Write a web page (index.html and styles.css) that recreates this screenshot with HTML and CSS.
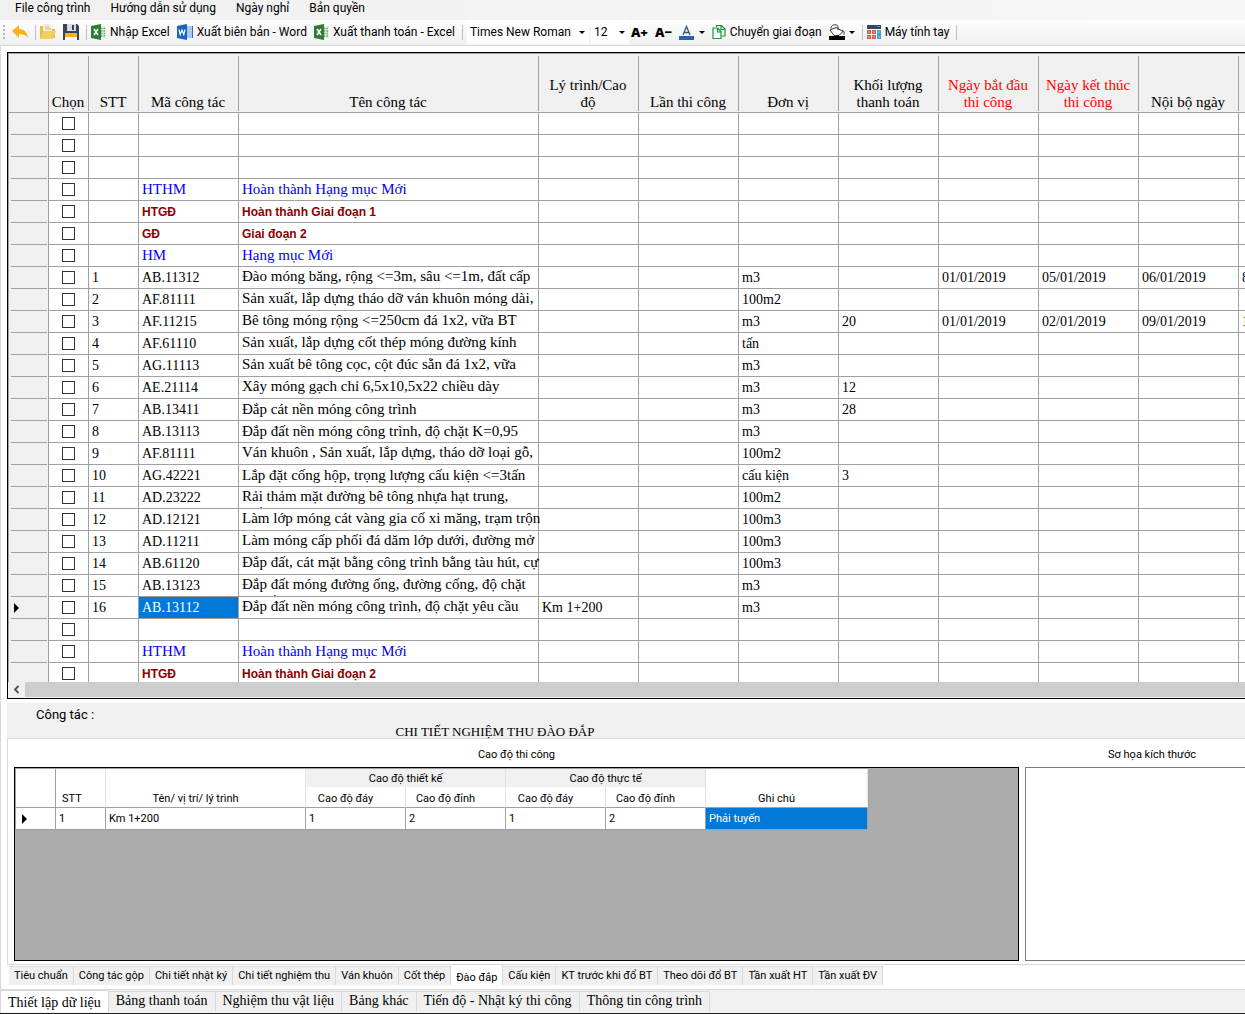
FILE: index.html
```html
<!DOCTYPE html>
<html lang="vi">
<head>
    <meta charset="UTF-8">
    <meta name="viewport" content="width=device-width, initial-scale=1.0">
    <title>Thiết lập dữ liệu</title>
    <link rel="stylesheet" href="styles.css">
</head>
<body>

    <nav class="menu">
        <button>File công trình</button>
        <button>Hướng dẫn sử dụng</button>
        <button>Ngày nghỉ</button>
        <button>Bản quyền</button>
    </nav>

    <div class="toolbar">
        <span class="grip"></span>
        <button aria-label="Undo">
            <svg width="16" height="16" viewBox="0 0 16 16"><path d="M0 7 7 1v4c5 0 8 3 9 9-2-3-5-4-9-4v4z" fill="#f9b115"/></svg>
        </button>
        <span class="sep"></span>
        <button aria-label="Open">
            <svg width="16" height="16" viewBox="0 0 16 16"><path d="M0 2h3v13H0z" fill="#e3bd4b"/><path d="M3 0h6l4 4v5H3z" fill="#f4ecd2"/><path d="M5 3h4M5 5h6" stroke="#cbbd92"/><path d="M12 5h3v9h-3z" fill="#e3bd4b"/><path d="M3 7h13l-3 8H0z" fill="#efd060"/></svg>
        </button>
        <button aria-label="Save">
            <svg width="16" height="16" viewBox="0 0 16 16"><path d="M0 0h14l2 2v14H0z" fill="#3c4358"/><path d="M4 0h9v7H4z" fill="#d9dce2"/><path d="M9 1h2v5H9z" fill="#3c4358"/><path d="M2 9h12v7H2z" fill="#fff"/><path d="M2 9h12v4H2z" fill="#f9b115"/></svg>
        </button>
        <span class="sep"></span>
        <button>
            <svg width="15" height="16" viewBox="0 0 15 16"><path d="M9 2h6v12H9z" fill="#e4efe5"/><path d="M10 4.500h4M10 7h4M10 9.500h4M10 12h4" stroke="#6aa76d" stroke-width="1.500" stroke-dasharray="1.500 1"/><path d="M0 2 10 0v16l-10-2z" fill="#2e7d32"/><path d="m3 5 4 6m0-6-4 6" stroke="#fff" stroke-width="1.500"/></svg>
            Nhập Excel
        </button>
        <button>
            <svg width="16" height="16" viewBox="0 0 16 16"><path d="M9 2h7v12H9z" fill="#a9c8ee"/><path d="M15.500 2v12" stroke="#2f6fc4"/><path d="M0 2 10 0v16l-10-2z" fill="#1565c0"/><path d="m2 5.500 1.200 5L5 6l1.800 4.500L8 5.500" stroke="#fff" stroke-width="1.200" fill="none"/></svg>
            Xuất biên bản - Word
        </button>
        <button>
            <svg width="15" height="16" viewBox="0 0 15 16"><path d="M9 2h6v12H9z" fill="#e4efe5"/><path d="M10 4.500h4M10 7h4M10 9.500h4M10 12h4" stroke="#6aa76d" stroke-width="1.500" stroke-dasharray="1.500 1"/><path d="M0 2 10 0v16l-10-2z" fill="#2e7d32"/><path d="m3 5 4 6m0-6-4 6" stroke="#fff" stroke-width="1.500"/></svg>
            Xuất thanh toán - Excel
        </button>
        <span class="sep"></span>
        <label class="combo combo-font">
            <select aria-label="Font"><option>Times New Roman</option></select>
        </label>
        <label class="combo combo-size">
            <select aria-label="Size"><option>12</option></select>
        </label>
        <button class="zoom-text">A+</button>
        <button class="zoom-text">A−</button>
        <button class="drop" aria-label="Font color">
            <svg width="16" height="16" viewBox="0 0 16 16"><path d="M4 11 7.500 2.500 11 11M5.500 8.500h4" stroke="#33557f" stroke-width="1.300" fill="none"/><path d="M0 12h15v4H0z" fill="#2b5fa8"/></svg>
        </button>
        <button>
            <svg width="14" height="16" viewBox="0 0 14 16"><path d="M4.500 3V1.500h5l3.500 3.500v7H9.500M9 1.500V5.500h4" stroke="#169c2e" stroke-width="1.200" fill="none"/><path d="M1 4h4.500l3.500 3.500v7H1zM5.500 4v4H9" stroke="#169c2e" stroke-width="1.200" fill="#fff"/></svg>
            Chuyển giai đoạn
        </button>
        <button class="drop" aria-label="Fill color">
            <svg width="16" height="16" viewBox="0 0 16 16"><path d="M1 6 7 3.500l7 4-4 4H5z" stroke="#333" fill="#fff"/><path d="M2 4.500C2 0 9-.500 9 3v3M13 6c2.500 1 2.500 4 1.500 5" stroke="#333" fill="none"/><path d="M0 12h16v4H0z" fill="#000"/></svg>
        </button>
        <span class="sep"></span>
        <button>
            <svg width="14" height="14" viewBox="0 0 14 14"><path d="M0 0h14v4H0z" fill="#34495e"/><path d="M10 1h3v1h-3z" fill="#3aa0d8"/><path d="M0 5h4v4H0zM5 5h4v4H5zM0 10h4v4H0zM5 10h4v4H5z" fill="#e2574c"/><path d="M10 5h4v9h-4z" fill="#3aa0d8"/><path d="M1.500 7h1M6.500 7h1M1.500 12h1M6.500 12h1M11.500 7h1M11.500 12h1" stroke="#fff"/></svg>
            Máy tính tay
        </button>
        <span class="sep"></span>
    </div>

    <main class="page">
        <section class="grid-frame">
            <div class="grid-view">
                <table class="grid">
                    <colgroup>
                        <col class="c-head"><col class="c-head"><col class="c-stt"><col><col class="c-name">
                        <col><col><col><col><col><col><col><col>
                    </colgroup>
                    <thead>
                        <tr>
                            <th class="corner"></th>
                            <th>Chọn</th>
                            <th>STT</th>
                            <th>Mã công tác</th>
                            <th>Tên công tác</th>
                            <th>Lý trình/Cao độ</th>
                            <th>Lần thi công</th>
                            <th>Đơn vị</th>
                            <th>Khối lượng thanh toán</th>
                            <th class="red">Ngày bắt đầu thi công</th>
                            <th class="red">Ngày kết thúc thi công</th>
                            <th>Nội bộ ngày</th>
                            <th></th>
                        </tr>
                    </thead>
                    <tbody>
                        <tr><th></th><td><input type="checkbox" aria-label="Chọn"></td><td></td><td></td><td></td><td></td><td></td><td></td><td></td><td></td><td></td><td></td><td></td></tr>
                        <tr><th></th><td><input type="checkbox" aria-label="Chọn"></td><td></td><td></td><td></td><td></td><td></td><td></td><td></td><td></td><td></td><td></td><td></td></tr>
                        <tr><th></th><td><input type="checkbox" aria-label="Chọn"></td><td></td><td></td><td></td><td></td><td></td><td></td><td></td><td></td><td></td><td></td><td></td></tr>
                        <tr class="item"><th></th><td><input type="checkbox" aria-label="Chọn"></td><td></td><td>HTHM</td><td>Hoàn thành Hạng mục Mới</td><td></td><td></td><td></td><td></td><td></td><td></td><td></td><td></td></tr>
                        <tr class="stage"><th></th><td><input type="checkbox" aria-label="Chọn"></td><td></td><td>HTGĐ</td><td>Hoàn thành Giai đoạn 1</td><td></td><td></td><td></td><td></td><td></td><td></td><td></td><td></td></tr>
                        <tr class="stage"><th></th><td><input type="checkbox" aria-label="Chọn"></td><td></td><td>GĐ</td><td>Giai đoạn 2</td><td></td><td></td><td></td><td></td><td></td><td></td><td></td><td></td></tr>
                        <tr class="item"><th></th><td><input type="checkbox" aria-label="Chọn"></td><td></td><td>HM</td><td>Hạng mục Mới</td><td></td><td></td><td></td><td></td><td></td><td></td><td></td><td></td></tr>
                        <tr><th></th><td><input type="checkbox" aria-label="Chọn"></td><td>1</td><td>AB.11312</td><td><div class="name">Đào móng băng, rộng &lt;=3m, sâu &lt;=1m, đất cấp</div></td><td></td><td></td><td>m3</td><td></td><td>01/01/2019</td><td>05/01/2019</td><td>06/01/2019</td><td>8</td></tr>
                        <tr><th></th><td><input type="checkbox" aria-label="Chọn"></td><td>2</td><td>AF.81111</td><td><div class="name">Sản xuất, lắp dựng tháo dỡ ván khuôn móng dài,</div></td><td></td><td></td><td>100m2</td><td></td><td></td><td></td><td></td><td></td></tr>
                        <tr><th></th><td><input type="checkbox" aria-label="Chọn"></td><td>3</td><td>AF.11215</td><td><div class="name">Bê tông móng rộng &lt;=250cm đá 1x2, vữa BT</div></td><td></td><td></td><td>m3</td><td>20</td><td>01/01/2019</td><td>02/01/2019</td><td>09/01/2019</td><td>1</td></tr>
                        <tr><th></th><td><input type="checkbox" aria-label="Chọn"></td><td>4</td><td>AF.61110</td><td><div class="name">Sản xuất, lắp dựng cốt thép móng đường kính</div></td><td></td><td></td><td>tấn</td><td></td><td></td><td></td><td></td><td></td></tr>
                        <tr><th></th><td><input type="checkbox" aria-label="Chọn"></td><td>5</td><td>AG.11113</td><td><div class="name">Sản xuất bê tông cọc, cột đúc sẵn đá 1x2, vữa</div></td><td></td><td></td><td>m3</td><td></td><td></td><td></td><td></td><td></td></tr>
                        <tr><th></th><td><input type="checkbox" aria-label="Chọn"></td><td>6</td><td>AE.21114</td><td><div class="name">Xây móng gạch chỉ 6,5x10,5x22 chiều dày</div></td><td></td><td></td><td>m3</td><td>12</td><td></td><td></td><td></td><td></td></tr>
                        <tr><th></th><td><input type="checkbox" aria-label="Chọn"></td><td>7</td><td>AB.13411</td><td><div class="name single">Đắp cát nền móng công trình</div></td><td></td><td></td><td>m3</td><td>28</td><td></td><td></td><td></td><td></td></tr>
                        <tr><th></th><td><input type="checkbox" aria-label="Chọn"></td><td>8</td><td>AB.13113</td><td><div class="name single">Đắp đất nền móng công trình, độ chặt K=0,95</div></td><td></td><td></td><td>m3</td><td></td><td></td><td></td><td></td><td></td></tr>
                        <tr><th></th><td><input type="checkbox" aria-label="Chọn"></td><td>9</td><td>AF.81111</td><td><div class="name">Ván khuôn , Sản xuất, lắp dựng, tháo dỡ loại gỗ,</div></td><td></td><td></td><td>100m2</td><td></td><td></td><td></td><td></td><td></td></tr>
                        <tr><th></th><td><input type="checkbox" aria-label="Chọn"></td><td>10</td><td>AG.42221</td><td><div class="name single">Lắp đặt cống hộp, trọng lượng cấu kiện &lt;=3tấn</div></td><td></td><td></td><td>cấu kiện</td><td>3</td><td></td><td></td><td></td><td></td></tr>
                        <tr><th></th><td><input type="checkbox" aria-label="Chọn"></td><td>11</td><td>AD.23222</td><td><div class="name">Rải thảm mặt đường bê tông nhựa hạt trung,<br>chiều dày</div></td><td></td><td></td><td>100m2</td><td></td><td></td><td></td><td></td><td></td></tr>
                        <tr><th></th><td><input type="checkbox" aria-label="Chọn"></td><td>12</td><td>AD.12121</td><td><div class="name">Làm lớp móng cát vàng gia cố xi măng, trạm trộn</div></td><td></td><td></td><td>100m3</td><td></td><td></td><td></td><td></td><td></td></tr>
                        <tr><th></th><td><input type="checkbox" aria-label="Chọn"></td><td>13</td><td>AD.11211</td><td><div class="name">Làm móng cấp phối đá dăm lớp dưới, đường mở</div></td><td></td><td></td><td>100m3</td><td></td><td></td><td></td><td></td><td></td></tr>
                        <tr><th></th><td><input type="checkbox" aria-label="Chọn"></td><td>14</td><td>AB.61120</td><td><div class="name">Đắp đất, cát mặt bằng công trình bằng tàu hút, cự</div></td><td></td><td></td><td>100m3</td><td></td><td></td><td></td><td></td><td></td></tr>
                        <tr><th></th><td><input type="checkbox" aria-label="Chọn"></td><td>15</td><td>AB.13123</td><td><div class="name">Đắp đất móng đường ống, đường cống, độ chặt<br>yêu cầu</div></td><td></td><td></td><td>m3</td><td></td><td></td><td></td><td></td><td></td></tr>
                        <tr><th><span class="current"></span></th><td><input type="checkbox" aria-label="Chọn"></td><td>16</td><td class="selected">AB.13112</td><td><div class="name">Đắp đất nền móng công trình, độ chặt yêu cầu</div></td><td>Km 1+200</td><td></td><td>m3</td><td></td><td></td><td></td><td></td><td></td></tr>
                        <tr><th></th><td><input type="checkbox" aria-label="Chọn"></td><td></td><td></td><td></td><td></td><td></td><td></td><td></td><td></td><td></td><td></td><td></td></tr>
                        <tr class="item"><th></th><td><input type="checkbox" aria-label="Chọn"></td><td></td><td>HTHM</td><td>Hoàn thành Hạng mục Mới</td><td></td><td></td><td></td><td></td><td></td><td></td><td></td><td></td></tr>
                        <tr class="stage"><th></th><td><input type="checkbox" aria-label="Chọn"></td><td></td><td>HTGĐ</td><td>Hoàn thành Giai đoạn 2</td><td></td><td></td><td></td><td></td><td></td><td></td><td></td><td></td></tr>
                    </tbody>
                </table>
            </div>
            <div class="scrollbar">
                <button aria-label="Scroll left"><svg width="7" height="9" viewBox="0 0 7 9"><path d="M5.500 1 2 4.500 5.500 8" stroke="#505050" stroke-width="1.800" fill="none"/></svg></button>
                <span class="thumb"></span>
            </div>
        </section>

        <section class="detail">
            <header class="detail-head">
                <p>Công tác :</p>
                <h2>CHI TIẾT NGHIỆM THU ĐÀO ĐẮP</h2>
            </header>
            <div class="detail-body">
                <div class="levels">
                    <h3>Cao độ thi công</h3>
                    <div class="levels-box">
                        <table class="subgrid">
                            <colgroup>
                                <col class="s-head"><col class="s-stt"><col class="s-name"><col><col><col><col><col class="s-note">
                            </colgroup>
                            <thead>
                                <tr>
                                    <th rowspan="2" class="dark"></th>
                                    <th rowspan="2" class="left">STT</th>
                                    <th rowspan="2">Tên/ vị trí/ lý trình</th>
                                    <th colspan="2" class="group">Cao độ thiết kế</th>
                                    <th colspan="2" class="group">Cao độ thực tế</th>
                                    <th rowspan="2">Ghi chú</th>
                                </tr>
                                <tr>
                                    <th>Cao độ đáy</th>
                                    <th>Cao độ đỉnh</th>
                                    <th>Cao độ đáy</th>
                                    <th>Cao độ đỉnh</th>
                                </tr>
                            </thead>
                            <tbody>
                                <tr>
                                    <td><span class="current"></span></td>
                                    <td>1</td>
                                    <td>Km 1+200</td>
                                    <td>1</td>
                                    <td>2</td>
                                    <td>1</td>
                                    <td>2</td>
                                    <td class="selected">Phải tuyến</td>
                                </tr>
                            </tbody>
                        </table>
                    </div>
                </div>
                <div class="sketch">
                    <h3>Sơ họa kích thước</h3>
                    <div class="sketch-box"></div>
                </div>
            </div>
        </section>

        <div class="tabs detail-tabs">
            <button>Tiêu chuẩn</button>
            <button>Công tác gộp</button>
            <button>Chi tiết nhật ký</button>
            <button>Chi tiết nghiệm thu</button>
            <button>Ván khuôn</button>
            <button>Cốt thép</button>
            <button class="active">Đào đắp</button>
            <button>Cấu kiện</button>
            <button>KT trước khi đổ BT</button>
            <button>Theo dõi đổ BT</button>
            <button>Tần xuất HT</button>
            <button>Tần xuất ĐV</button>
        </div>
    </main>

    <div class="tabs main-tabs">
        <button class="active">Thiết lập dữ liệu</button>
        <button>Bảng thanh toán</button>
        <button>Nghiệm thu vật liệu</button>
        <button>Bảng khác</button>
        <button>Tiến độ - Nhật ký thi công</button>
        <button>Thông tin công trình</button>
    </div>

</body>
</html>
```
FILE: styles.css
```css
* {
    box-sizing: border-box;
}

body {
    margin: 0;
    height: 100vh;
    display: flex;
    flex-direction: column;
    overflow: hidden;
    background: #fff;
    color: #000;
    font-family: Roboto, sans-serif;
    font-size: 12px;
    border-bottom: 1px solid #222;
}

button {
    font: inherit;
    color: inherit;
    background: none;
    border: none;
    padding: 0;
    white-space: nowrap;
}

h2, h3, p {
    margin: 0;
    font-weight: normal;
}

/* menu + toolbar */

.menu {
    display: flex;
    gap: 20px;
    height: 20px;
    padding-left: 15px;
    line-height: 16px;
    align-items: flex-start;
    background: linear-gradient(90deg, #f0f0f0, #f6f6f6);
}

.toolbar {
    display: flex;
    align-items: center;
    height: 26px;
    padding: 0 0 1px 3px;
    background: linear-gradient(#fdfdfd, #f0f0f0);
    border-bottom: 1px solid #d9d9d9;
}

.toolbar button {
    display: flex;
    align-items: center;
    gap: 4px;
    height: 24px;
    margin-right: 7px;
}

.grip {
    width: 2px;
    height: 15px;
    margin-right: 7px;
    background: repeating-linear-gradient(#b8b8b8 0 2px, transparent 2px 4px);
}

.sep {
    width: 1px;
    height: 15px;
    margin-right: 4px;
    background: #bdbdbd;
}

.combo {
    display: flex;
    align-items: center;
    height: 24px;
    margin-right: 2px;
    background: #fff;
}

.combo select {
    appearance: none;
    flex: 1;
    min-width: 0;
    border: none;
    padding: 0 0 0 3px;
    background: none;
    color: #000;
    font: inherit;
}

.combo::after,
.drop::after {
    content: "";
    border: 3px solid transparent;
    border-top-color: #000;
    border-bottom: none;
}

.combo::after {
    margin: 0 4px 0 8px;
}

.combo-font {
    width: 122px;
}

.combo-size {
    width: 38px;
}

.toolbar .drop {
    gap: 4px;
}

.toolbar .zoom-text {
    padding-bottom: 1px;
    font-family: 'Open Sans', sans-serif;
    font-size: 13px;
    font-weight: 800;
}

/* work grid */

.page {
    flex: 1;
    display: flex;
    flex-direction: column;
    min-height: 0;
    padding: 6px 0 0 6px;
    border-left: 1px solid #d9d9d9;
}

.grid-frame {
    flex: 1;
    display: flex;
    flex-direction: column;
    min-height: 0;
    border: 1px solid #000;
    border-right: none;
}

.grid-view {
    flex: 1;
    min-height: 0;
    overflow: hidden;
    border-top: 1px solid #a0a0a0;
    border-left: 1px solid #a0a0a0;
}

.grid {
    width: 1330px;
    table-layout: fixed;
    border-collapse: separate;
    border-spacing: 0;
    font-family: 'Liberation Serif', serif;
    font-size: 14px;
    line-height: 17px;
}

.grid col {
    width: 100px;
}

.grid .c-head {
    width: 40px;
}

.grid .c-stt {
    width: 50px;
}

.grid .c-name {
    width: 300px;
}

.grid thead th {
    height: 59px;
    padding: 0 4px 1px 2px;
    vertical-align: bottom;
    font-size: 15px;
    font-weight: normal;
    background: linear-gradient(#a0a0a0, #a0a0a0) right 2px / 1px 55px no-repeat #f0f0f0;
    border-bottom: 1px solid #a0a0a0;
}

.grid thead .corner {
    background: #f0f0f0;
    border-right: 1px solid #a0a0a0;
}

.grid thead .red {
    color: #f00;
}

.grid tbody td {
    height: 22px;
    padding: 0 3px;
    border-right: 1px solid #a0a0a0;
    border-bottom: 1px solid #a0a0a0;
    white-space: nowrap;
}

.grid tbody th {
    padding: 0 5px;
    background: linear-gradient(#a0a0a0, #a0a0a0) 2px 100% / 36px 1px no-repeat #f0f0f0;
    border-right: 1px solid #a0a0a0;
}

.grid input {
    appearance: none;
    display: block;
    width: 13px;
    height: 13px;
    margin: 0 auto;
    border: 1px solid #333;
    background: #fff;
}

/* long names run over the cell edge but never below the row */
.name {
    height: 21px;
    padding-top: 1px;
    overflow-x: visible;
    overflow-y: clip;
    font-size: 15px;
}

.single {
    padding-top: 2px;
}

.item {
    color: #00f;
    font-size: 15px;
}

.stage {
    color: #8b0000;
    font-family: 'Liberation Sans', sans-serif;
    font-size: 12px;
    font-weight: bold;
    line-height: 18px;
}

.grid .selected,
.subgrid .selected {
    background: #0078d7;
    color: #fff;
}

.current {
    display: block;
    width: 5px;
    border: 5px solid transparent;
    border-left-color: #000;
    border-right: none;
}

.scrollbar {
    display: flex;
    height: 16px;
    background: #f0f0f0;
}

.scrollbar button {
    width: 17px;
    height: 15px;
    line-height: 0;
}

.thumb {
    flex: 1;
    height: 15px;
    background: #cdcdcd;
}

/* detail panel */

.detail {
    margin-top: 4px;
    overflow: hidden;
}

.detail-head {
    height: 35px;
    padding: 3px 0 0 29px;
    background: #f0f0f0;
    font-size: 13px;
    line-height: 17px;
}

.detail-head h2 {
    padding-right: 291px;
    text-align: center;
    font-family: 'Liberation Serif', serif;
    font-size: 13px;
}

.detail-body {
    display: flex;
    gap: 6px;
    height: 227px;
    margin-right: -35px;
    padding: 6px 0 3px 6px;
    border: 1px solid #d9d9d9;
}

.levels,
.sketch {
    display: flex;
    flex-direction: column;
    font-size: 11px;
}

.levels {
    flex: 1;
}

.sketch {
    width: 254px;
}

.detail-body h3 {
    height: 22px;
    line-height: 20px;
    text-align: center;
    font-size: 11px;
}

.levels-box {
    flex: 1;
    border: 1px solid #000;
    background: #ababab;
}

.sketch-box {
    flex: 1;
    border: 1px solid #7a7a7a;
}

.subgrid {
    width: 853px;
    table-layout: fixed;
    border-collapse: separate;
    border-spacing: 0;
    border-top: 1px solid #a0a0a0;
    border-left: 1px solid #a0a0a0;
    background: #fff;
    line-height: 14px;
}

.subgrid col {
    width: 100px;
}

.subgrid .s-head {
    width: 40px;
}

.subgrid .s-stt {
    width: 50px;
}

.subgrid .s-name {
    width: 200px;
}

.subgrid .s-note {
    width: 162px;
}

.subgrid th {
    height: 21px;
    padding: 0 20px 1px 0;
    vertical-align: bottom;
    font-weight: normal;
    white-space: nowrap;
    border-right: 1px solid #e3e3e3;
    border-bottom: 1px solid #a0a0a0;
}

.subgrid .group {
    height: 18px;
    padding-right: 0;
    background: #f0f0f0;
    border-bottom: none;
}

.subgrid .left {
    padding-left: 6px;
    text-align: left;
}

.subgrid .dark {
    border-right-color: #a0a0a0;
}

.subgrid td {
    height: 22px;
    padding: 1px 3px 0;
    border-right: 1px solid #a0a0a0;
    border-bottom: 1px solid #a0a0a0;
}

.subgrid .current {
    margin-left: 3px;
}

/* tabs */

.tabs {
    display: flex;
    align-items: flex-start;
}

.tabs button {
    border: 1px solid #d9d9d9;
    border-left: none;
    border-bottom: none;
    background: #f0f0f0;
}

.tabs .active {
    background: #fff;
}

.detail-tabs {
    height: 24px;
    padding: 1px 0 0 2px;
    font-size: 11px;
    line-height: 15px;
}

.detail-tabs button {
    height: 19px;
    padding: 0 5px 2px;
}

.detail-tabs .active {
    height: 21px;
    margin-top: -2px;
    padding: 4px 5px 0;
}

.main-tabs {
    height: 24px;
    border-top: 1px solid #d9d9d9;
    border-left: 1px solid #d9d9d9;
    background: #f0f0f0;
    font-family: 'Liberation Serif', serif;
    font-size: 14px;
    line-height: 17px;
}

.main-tabs button {
    height: 20px;
    margin-top: 1px;
    padding: 0 7px 2px;
}

.main-tabs .active {
    height: 22px;
    margin-top: 0;
    padding: 2px 7px 0;
}
```
